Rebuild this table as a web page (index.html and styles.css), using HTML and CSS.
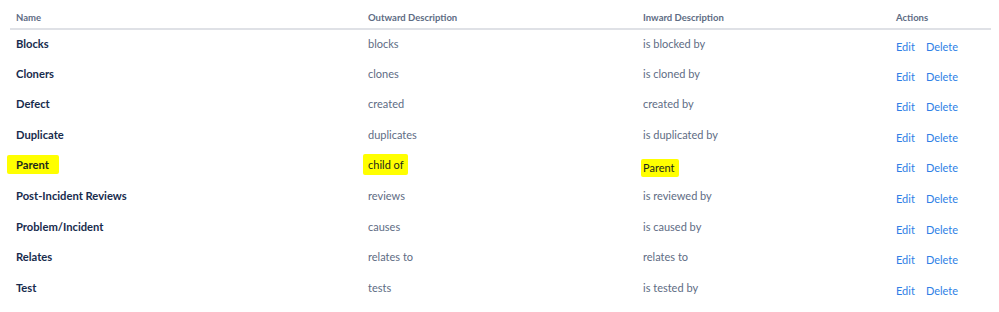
FILE: index.html
```html
<!DOCTYPE html>
<html lang="en">
<head>
<meta charset="UTF-8" />
<meta name="viewport" content="width=device-width, initial-scale=1" />
<title>Issue Linking</title>
<link rel="stylesheet" href="styles.css">
</head>
<body>

<table class="link-types">
  <thead>
    <tr>
      <th class="col-name">Name</th>
      <th class="col-out">Outward Description</th>
      <th class="col-in">Inward Description</th>
      <th class="col-actions">Actions</th>
    </tr>
  </thead>
  <tbody>
    <tr>
      <td class="name">Blocks</td><td class="desc">blocks</td><td class="desc">is blocked by</td>
      <td class="actions"><a href="#">Edit</a><a href="#">Delete</a></td>
    </tr>
    <tr>
      <td class="name">Cloners</td><td class="desc">clones</td><td class="desc">is cloned by</td>
      <td class="actions"><a href="#">Edit</a><a href="#">Delete</a></td>
    </tr>
    <tr>
      <td class="name">Defect</td><td class="desc">created</td><td class="desc">created by</td>
      <td class="actions"><a href="#">Edit</a><a href="#">Delete</a></td>
    </tr>
    <tr>
      <td class="name">Duplicate</td><td class="desc">duplicates</td><td class="desc">is duplicated by</td>
      <td class="actions"><a href="#">Edit</a><a href="#">Delete</a></td>
    </tr>
    <tr>
      <td class="name"><mark class="hl hl-name">Parent</mark></td>
      <td class="desc"><mark class="hl hl-out">child of</mark></td>
      <td class="desc"><mark class="hl hl-in">Parent</mark></td>
      <td class="actions"><a href="#">Edit</a><a href="#">Delete</a></td>
    </tr>
    <tr>
      <td class="name">Post-Incident Reviews</td><td class="desc">reviews</td><td class="desc">is reviewed by</td>
      <td class="actions"><a href="#">Edit</a><a href="#">Delete</a></td>
    </tr>
    <tr>
      <td class="name">Problem/Incident</td><td class="desc">causes</td><td class="desc">is caused by</td>
      <td class="actions"><a href="#">Edit</a><a href="#">Delete</a></td>
    </tr>
    <tr>
      <td class="name">Relates</td><td class="desc">relates to</td><td class="desc">relates to</td>
      <td class="actions"><a href="#">Edit</a><a href="#">Delete</a></td>
    </tr>
    <tr>
      <td class="name">Test</td><td class="desc">tests</td><td class="desc">is tested by</td>
      <td class="actions"><a href="#">Edit</a><a href="#">Delete</a></td>
    </tr>
  </tbody>
</table>

</body>
</html>
```

FILE: styles.css
```css
:root {
  --text-dark: #172b4d;
  --text-muted: #5e6c84;
  --link: #2f7fe6;
  --border: #dfe1e6;
  --marker: #ffff00;
}
body {
  margin: 0;
  padding: 8px 8px 0 10px;
  background: #fff;
  font-family: Lato, "Noto Sans", sans-serif;
  font-size: 11px;
  color: var(--text-dark);
}
.link-types {
  width: 981px;
  border-collapse: collapse;
  table-layout: fixed;
}
/* column widths are content widths, 6px padding each side comes on top */
.col-name { width: 340px; }
.col-out { width: 263px; }
.col-in { width: 241px; }
.link-types th {
  text-align: left;
  font-size: 9.5px;
  font-weight: 700;
  color: var(--text-muted);
  padding: 4px 6px 0;
  height: 16px;
  vertical-align: top;
  border-bottom: 2px solid var(--border);
}
.link-types td {
  height: 30.6px;
  padding: 7px 6px 0;
  vertical-align: top;
  box-sizing: border-box;
}
.name {
  font-size: 11.2px;
  font-weight: 700;
}
.desc {
  color: var(--text-muted);
}
.actions {
  padding-top: 10px !important;
}
.actions a {
  color: var(--link);
  text-decoration: none;
  margin-right: 11px;
}
.hl {
  display: inline-block;
  background: var(--marker);
  color: #1c2a1c;
  border-radius: 2px;
}
.hl-name {
  padding: 3px 10px 3px 9px;
  margin: -3px 0 0 -9px;
}
.hl-out {
  padding: 4px 4px 4px 5px;
  margin: -4px 0 0 -5px;
}
.hl-in {
  padding: 2px 4px 3px 2px;
  margin: 1px 0 0 -2px;
}
```
